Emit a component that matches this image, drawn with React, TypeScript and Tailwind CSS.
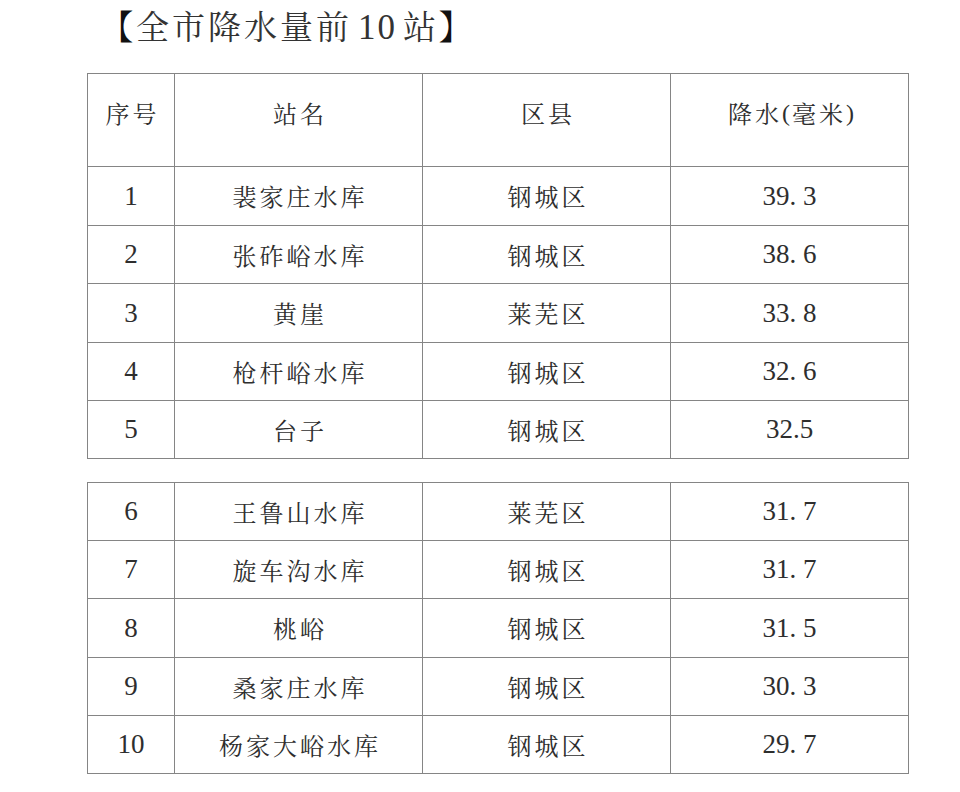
import React from "react";

type Row = { no: string; name: string; county: string; rain: string };

const part1: Row[] = [
  { no: "1", name: "裴家庄水库", county: "钢城区", rain: "39. 3" },
  { no: "2", name: "张砟峪水库", county: "钢城区", rain: "38. 6" },
  { no: "3", name: "黄崖", county: "莱芜区", rain: "33. 8" },
  { no: "4", name: "枪杆峪水库", county: "钢城区", rain: "32. 6" },
  { no: "5", name: "台子", county: "钢城区", rain: "32.5" },
];

const part2: Row[] = [
  { no: "6", name: "王鲁山水库", county: "莱芜区", rain: "31. 7" },
  { no: "7", name: "旋车沟水库", county: "钢城区", rain: "31. 7" },
  { no: "8", name: "桃峪", county: "钢城区", rain: "31. 5" },
  { no: "9", name: "桑家庄水库", county: "钢城区", rain: "30. 3" },
  { no: "10", name: "杨家大峪水库", county: "钢城区", rain: "29. 7" },
];

const cjk =
  "font-['Noto_Serif_CJK_SC','Noto_Sans_CJK_SC',serif] text-[24px] tracking-[3px] pl-[3px] leading-none";
const num = "font-['Liberation_Serif','Times_New_Roman',serif] text-[27px] leading-none";

function DataRows({ rows, heights, firstTop }: { rows: Row[]; heights: string[]; firstTop: boolean }) {
  return (
    <>
      {rows.map((r, i) => (
        <div
          key={r.no}
          className={`grid grid-cols-[86px_248px_248px_1fr] ${heights[i]} ${
            i === 0 && !firstTop ? "" : "border-t border-[#858585]"
          }`}
        >
          <div className={`flex items-center justify-center ${num}`}>{r.no}</div>
          <div className={`flex items-center justify-center border-l border-[#858585] ${cjk}`}>{r.name}</div>
          <div className={`flex items-center justify-center border-l border-[#858585] ${cjk}`}>{r.county}</div>
          <div className={`flex items-center justify-center border-l border-[#858585] ${num}`}>{r.rain}</div>
        </div>
      ))}
    </>
  );
}

export default function App() {
  return (
    <div className="w-[960px] h-[792px] bg-white text-[#2e2e2e] overflow-hidden">
      <div className="pt-[7px] pl-[100px] h-[73px]">
        <div className="font-['Noto_Serif_CJK_SC','Noto_Sans_CJK_SC',serif] text-[33px] leading-[36px] tracking-[3px] text-[#333]">
          <span className="font-black text-[#111]">【</span>全市降水量前
          <span className="font-['Liberation_Serif',serif] text-[35px] tracking-[2px] px-[6px]">10</span>站
          <span className="font-black text-[#111]">】</span>
        </div>
      </div>
      <div className="ml-[87px] w-[822px]">
        <div className="border border-[#858585]">
          <div className="grid grid-cols-[86px_248px_248px_1fr] h-[92px]">
            <div className={`flex items-center justify-center pb-[14px] ${cjk}`}>序号</div>
            <div className={`flex items-center justify-center pb-[14px] border-l border-[#858585] ${cjk}`}>站名</div>
            <div className={`flex items-center justify-center pb-[14px] border-l border-[#858585] ${cjk}`}>区县</div>
            <div className={`flex items-center justify-center pb-[14px] border-l border-[#858585] ${cjk}`}>
              降水<span className="font-['Liberation_Serif',serif] tracking-[2px]">(</span>毫米
              <span className="font-['Liberation_Serif',serif] tracking-normal">)</span>
            </div>
          </div>
          <DataRows
            rows={part1}
            heights={["h-[59px]", "h-[58px]", "h-[59px]", "h-[58px]", "h-[58px]"]}
            firstTop={true}
          />
        </div>
        <div className="mt-[23px] border border-[#858585]">
          <DataRows
            rows={part2}
            heights={["h-[57px]", "h-[58px]", "h-[59px]", "h-[58px]", "h-[58px]"]}
            firstTop={false}
          />
        </div>
      </div>
    </div>
  );
}
